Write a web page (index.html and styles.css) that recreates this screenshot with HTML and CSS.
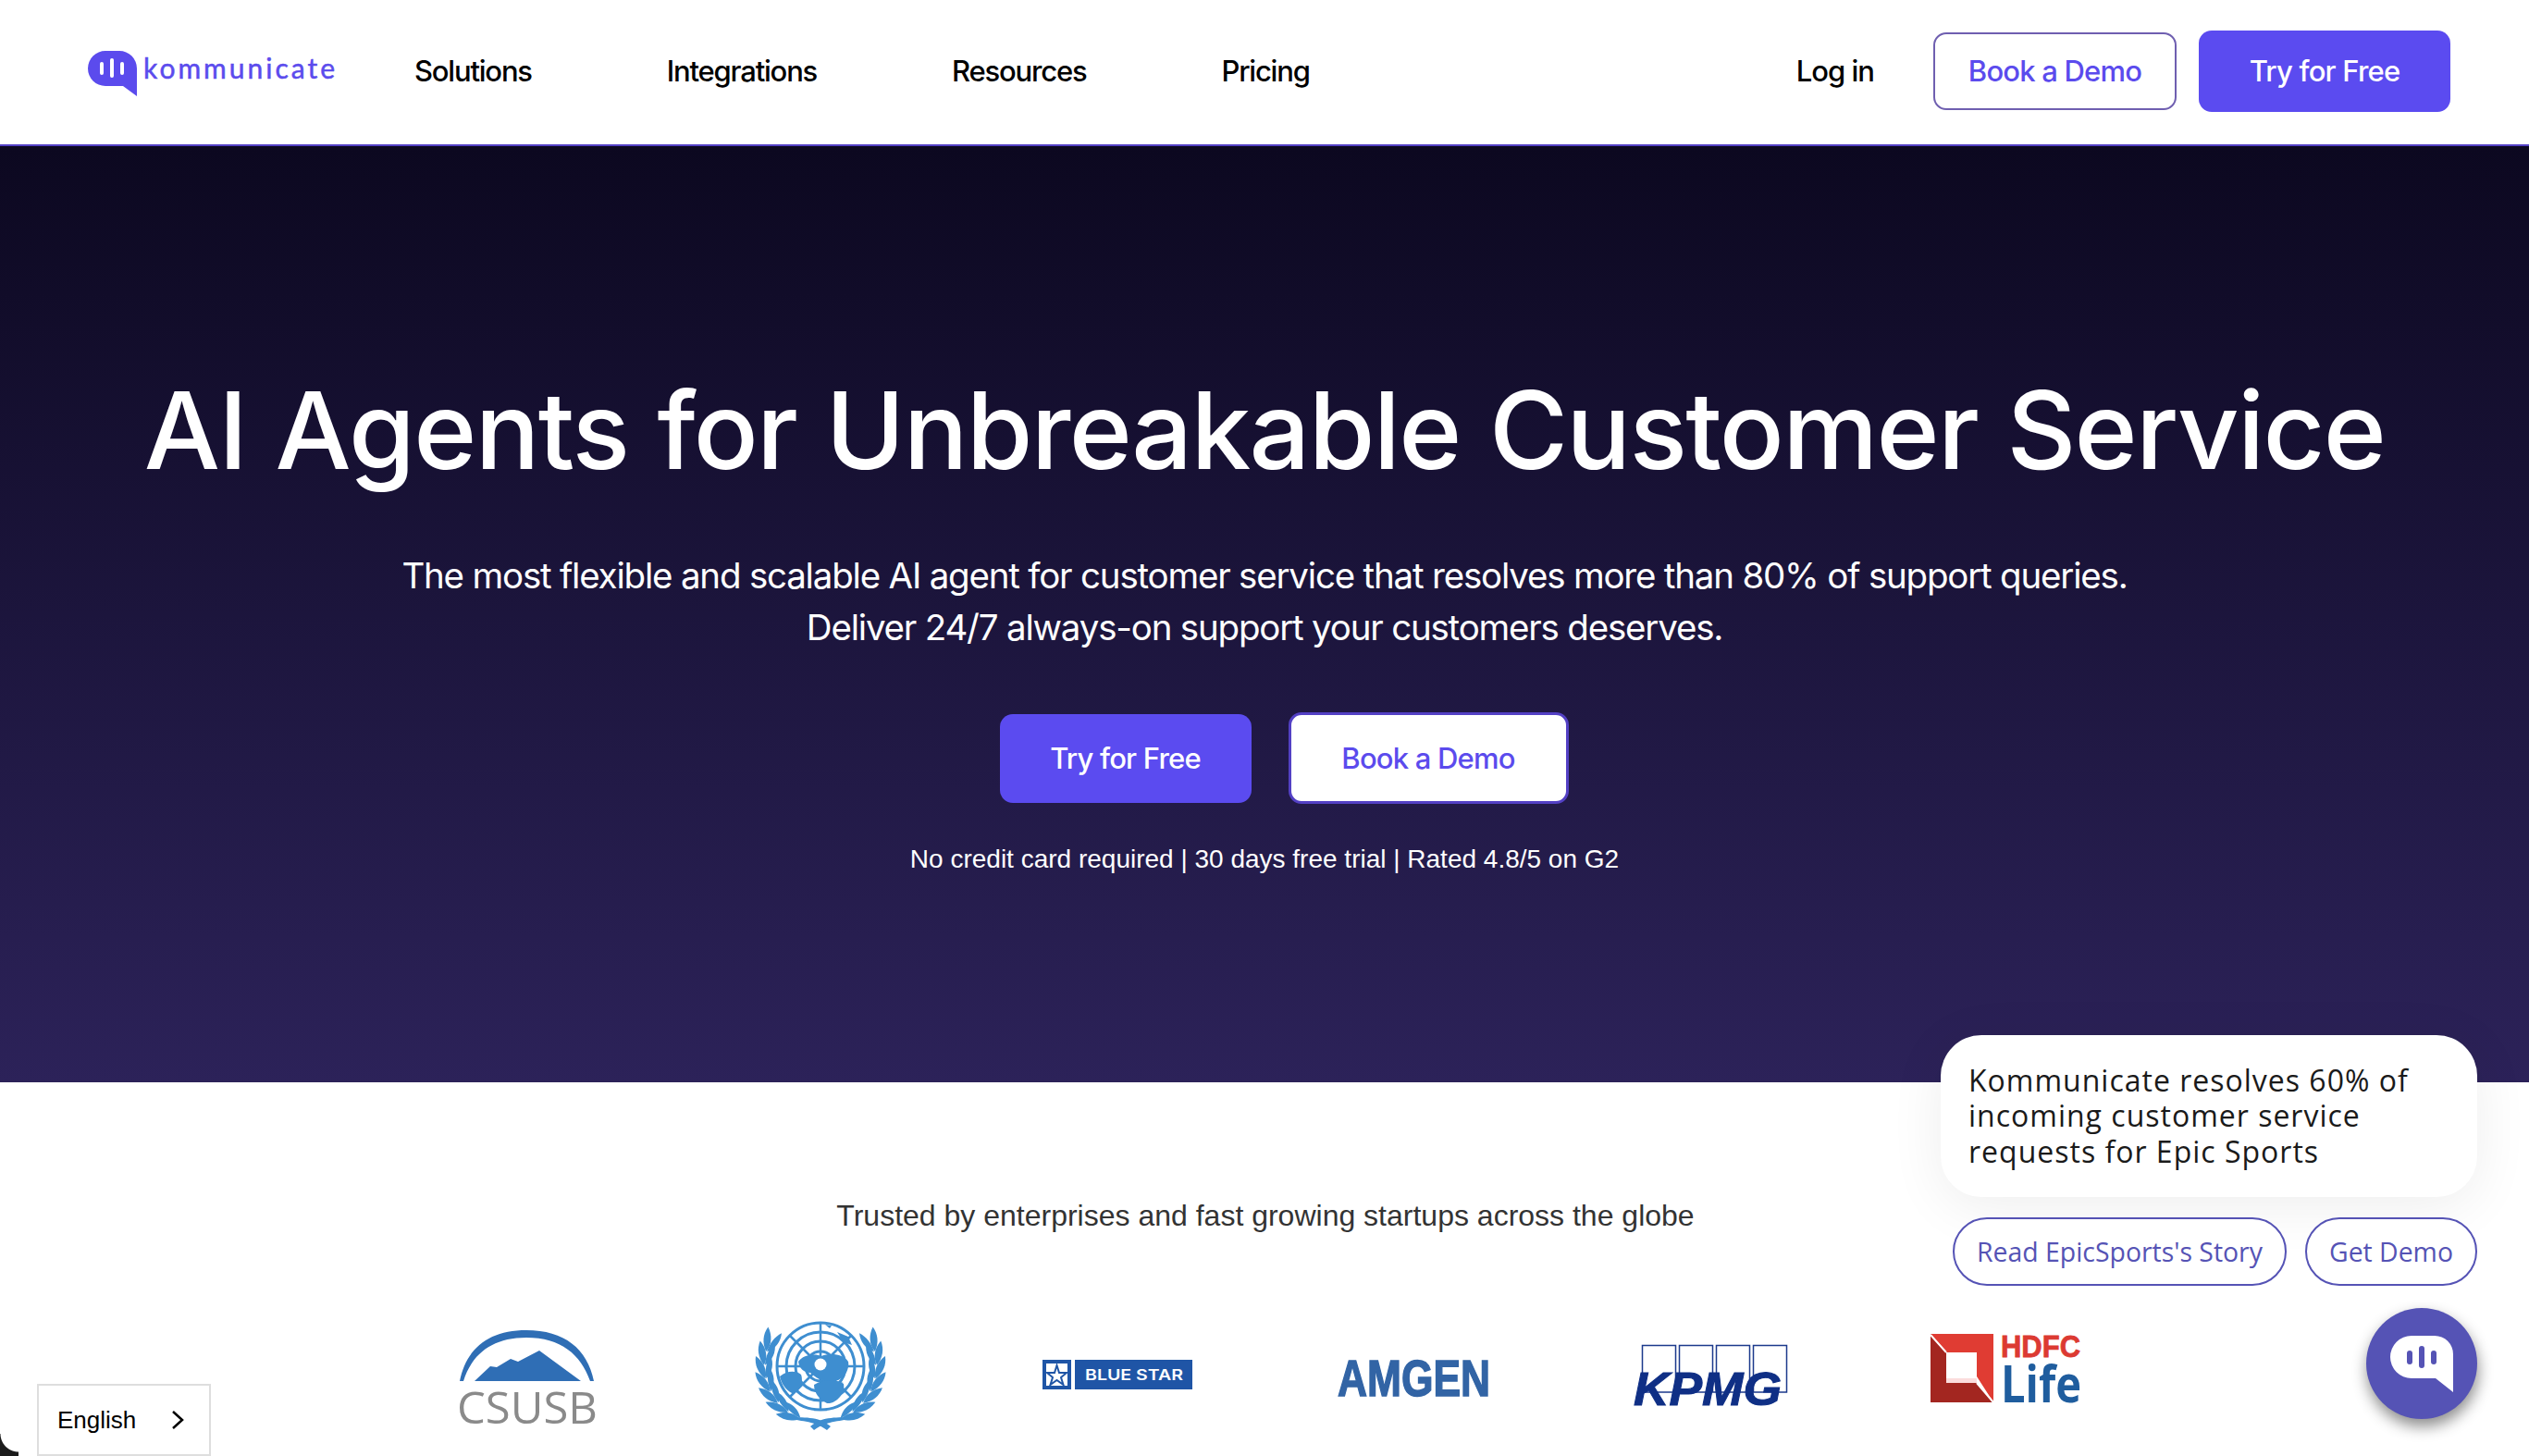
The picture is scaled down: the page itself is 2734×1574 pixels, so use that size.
FILE: index.html
```html
<!DOCTYPE html>
<html lang="en">
<head>
<meta charset="utf-8">
<title>Kommunicate</title>
<link rel="stylesheet" href="styles.css">
</head>
<body>
<header class="nav">
  <a class="logo">
    <svg class="logo-mark" viewBox="0 0 54 49"><path fill="#5b4bed" d="M20 0H35a19 19 0 0 1 19 19V49L39 38H20A19 19 0 0 1 1 19 19 19 0 0 1 20 0z"/><g fill="#fff"><rect x="14" y="12" width="4" height="14" rx="2"/><rect x="25" y="8" width="4" height="21" rx="2"/><rect x="36" y="12" width="4" height="14" rx="2"/></g></svg>
    <span class="logo-text">kommunicate</span>
  </a>
  <nav class="menu">
    <a>Solutions</a><a>Integrations</a><a>Resources</a><a>Pricing</a>
  </nav>
  <div class="actions">
    <a class="login">Log in</a>
    <a class="btn btn-outline btn-nav-outline">Book a Demo</a>
    <a class="btn btn-solid btn-nav-solid">Try for Free</a>
  </div>
</header>

<section class="hero">
  <h1>AI Agents for Unbreakable Customer Service</h1>
  <p class="lead">The most flexible and scalable AI agent for customer service that resolves more than 80% of support queries.<br>Deliver 24/7 always-on support your customers deserves.</p>
  <div class="cta">
    <a class="btn btn-solid btn-hero">Try for Free</a>
    <a class="btn btn-outline btn-hero btn-hero-outline">Book a Demo</a>
  </div>
  <p class="note">No credit card required | 30 days free trial | Rated 4.8/5 on G2</p>
</section>

<section class="trusted">
  <p class="trusted-title">Trusted by enterprises and fast growing startups across the globe</p>
  <div class="logos">
    <svg class="brand" viewBox="409 1427 320 120">
      <path fill="#2f6eb5" d="M495 1493C502 1458 526 1438 567 1438S633 1458 640 1493H636C626 1464 604 1446 567 1446S508 1464 499 1493z"/>
      <path fill="#2f6eb5" d="M511 1493L528 1477 535 1478 550 1469 558 1472 581 1460 626 1493z"/>
      <text x="492" y="1539" class="t-csusb" textLength="152" lengthAdjust="spacingAndGlyphs">CSUSB</text>
    </svg>

    <svg class="brand" viewBox="729 1427 320 120">
      <g fill="none" stroke="#3e8ed0">
        <circle cx="885" cy="1477" r="47" stroke-width="3"/>
        <circle cx="885" cy="1477" r="37" stroke-width="3"/>
        <circle cx="885" cy="1477" r="27" stroke-width="3"/>
        <circle cx="885" cy="1477" r="16" stroke-width="3"/>
        <path stroke-width="2.500" d="M885 1430V1524M838 1477H932M852 1444L918 1510M918 1444L852 1510"/>
      </g>
      <g fill="#3e8ed0">
        <path d="M861 1472C866 1464 880 1463 886 1466 896 1462 910 1464 915 1472 917 1482 908 1494 898 1493 890 1495 880 1490 874 1484 868 1484 862 1480 861 1472z"/>
        <path d="M841 1488C848 1482 858 1481 864 1486 867 1494 862 1507 854 1506 847 1502 843 1496 841 1488z"/>
        <path d="M878 1497C888 1491 904 1491 910 1496 912 1506 902 1518 892 1517 884 1513 878 1506 878 1497z"/>
        <path d="M903 1440L915 1445 919 1454 910 1451z"/>
        <path d="M890 1432L897 1433 895 1436z"/>
      </g>
      <circle cx="885" cy="1475" r="6.500" fill="#fff"/>
      <defs>
        <g id="blade">
          <path d="M824 1480C817 1472 815 1463 818 1454 825 1461 828 1471 824 1480z"/>
          <path d="M825 1480C825 1470 828 1462 834 1456 836 1465 833 1474 825 1480z"/>
        </g>
      </defs>
      <g fill="#3e8ed0">
        <g id="wreath">
          <use href="#blade" transform="rotate(18 885 1477)"/>
          <use href="#blade" transform="rotate(4 885 1477)"/>
          <use href="#blade" transform="rotate(-10 885 1477)"/>
          <use href="#blade" transform="rotate(-24 885 1477)"/>
          <use href="#blade" transform="rotate(-38 885 1477)"/>
          <use href="#blade" transform="rotate(-52 885 1477)"/>
          <use href="#blade" transform="rotate(-66 885 1477)"/>
          <path d="M850 1532C862 1538 876 1534 892 1546L896 1542C882 1530 866 1533 850 1532z"/>
        </g>
        <use href="#wreath" transform="translate(1770 0) scale(-1 1)"/>
      </g>
    </svg>

    <svg class="brand" viewBox="1049 1427 320 120">
      <rect x="1125" y="1470" width="31" height="32" fill="#1f55a6"/>
      <rect x="1129" y="1474" width="23" height="24" fill="#fff"/>
      <path fill="none" stroke="#1f55a6" stroke-width="2" d="M1140.500 1476L1143 1484 1151 1484 1145 1489 1147.500 1497 1140.500 1492 1133.500 1497 1136 1489 1130 1484 1138 1484z"/>
      <rect x="1160" y="1470" width="127" height="32" fill="#1f55a6"/>
      <text x="1171" y="1492" class="t-bluestar" textLength="106" lengthAdjust="spacingAndGlyphs">BLUE STAR</text>
    </svg>

    <svg class="brand" viewBox="1369 1427 320 120">
      <text x="1444" y="1509" class="t-amgen" textLength="165" lengthAdjust="spacingAndGlyphs">AMGEN</text>
    </svg>

    <svg class="brand" viewBox="1689 1427 320 120">
      <g fill="none" stroke="#1c3a8c" stroke-width="1.500">
        <path d="M1773.500 1505V1454.500H1809.500V1505M1813.500 1505V1454.500H1849.500V1505M1853.500 1505V1454.500H1889.500V1505M1893.500 1505V1454.500H1929.500V1505H1773.500"/>
      </g>
      <text x="1764" y="1519" class="t-kpmg" textLength="160" lengthAdjust="spacingAndGlyphs">KPMG</text>
    </svg>

    <svg class="brand" viewBox="2009 1427 320 120">
      <path fill="#e03c33" d="M2085 1442H2153V1516L2135 1488V1462H2102z"/>
      <path fill="#a32620" d="M2085 1442L2102 1462V1495H2135L2153 1516H2085z"/>
      <rect x="2102" y="1462" width="33" height="28" fill="#fff"/>
      <rect x="2102" y="1490" width="33" height="5" fill="#fbdcdc"/>
      <path fill="none" stroke="#fff" stroke-width="2" d="M2085 1443L2102 1462M2135 1495L2153 1516"/>
      <text x="2161" y="1467" class="t-hdfc" textLength="86" lengthAdjust="spacingAndGlyphs">HDFC</text>
      <text x="2161" y="1516" class="t-life" textLength="87" lengthAdjust="spacingAndGlyphs">Life</text>
    </svg>
  </div>
</section>

<div class="chat-widget">
  <div class="chat-bubble">Kommunicate resolves 60% of incoming customer service requests for Epic Sports</div>
  <div class="chat-links">
    <a class="chat-link chat-link-story">Read EpicSports's Story</a>
    <a class="chat-link chat-link-demo">Get Demo</a>
  </div>
  <button class="chat-fab" aria-label="Open chat">
    <svg class="chat-icon" viewBox="0 0 68 61"><path fill="#fff" d="M23 0H48a20 20 0 0 1 20 20V61L49 46H23A23 23 0 0 1 0 23 23 23 0 0 1 23 0z"/><g fill="#5553b5"><rect x="18" y="16" width="6" height="15" rx="3"/><rect x="31" y="11" width="6" height="24" rx="3"/><rect x="44" y="16" width="6" height="15" rx="3"/></g></svg>
  </button>
</div>

<div class="lang">
  <span>English</span>
  <svg class="lang-chev" viewBox="0 0 14 22"><path d="M2 2L12 11 2 20" fill="none" stroke="#000" stroke-width="2.500"/></svg>
</div>
<div class="corner"></div>
</body>
</html>
```
FILE: styles.css
```css
* { box-sizing: border-box; }
html, body { margin: 0; height: 1574px; overflow: hidden; background: #fff; }
body { font-family: "Inter", "Liberation Sans", sans-serif; color: #000; position: relative; }
a { text-decoration: none; color: inherit; }

.nav {
  height: 158px;
  border-bottom: 2px solid #5340c4;
  display: flex;
  align-items: center;
  padding: 0 85px 3px 94px;
}
.logo { display: flex; align-items: flex-start; width: 354px; flex: none; }
.logo-mark { width: 54px; height: 49px; display: block; margin-top: 6px; }
.logo-text {
  font-family: "Lato", sans-serif;
  font-size: 30px;
  letter-spacing: 3px;
  color: #5b4bed;
  -webkit-text-stroke: 0.5px #5b4bed;
  margin: 6px 0 0 7px;
  line-height: 36px;
}
.menu { display: flex; gap: 146px; font-size: 31px; letter-spacing: -1.2px; font-weight: 500; }
.actions { margin-left: auto; display: flex; align-items: center; }
.login { font-size: 31px; letter-spacing: -1px; font-weight: 500; margin-right: 64px; }

.btn {
  display: flex;
  align-items: center;
  justify-content: center;
  font-size: 31px;
  font-weight: 500;
  letter-spacing: -0.8px;
  border-radius: 14px;
}
.btn-solid { background: #5b4bf0; color: #fff; }
.btn-outline { background: #fff; color: #5b4bed; border: 2px solid #6f5fb0; }
.btn-nav-outline { width: 263px; height: 84px; margin-right: 24px; }
.btn-nav-solid { width: 272px; height: 88px; }

.hero {
  height: 1012px;
  background: linear-gradient(180deg, #0c0820 0%, #2c2259 100%);
  color: #fff;
  display: flex;
  flex-direction: column;
  align-items: center;
  padding-top: 232px;
}
.hero h1 {
  margin: 0;
  font-size: 116px;
  line-height: 150px;
  font-weight: 500;
  letter-spacing: -1.7px;
  word-spacing: 2px;
  white-space: nowrap;
}
.lead {
  margin: 54px 0 0;
  font-size: 38.500px;
  line-height: 56px;
  letter-spacing: -1.2px;
  text-align: center;
}
.cta { display: flex; gap: 40px; margin: 64px 0 0 42px; align-items: center; }
.btn-hero { width: 272px; height: 96px; }
.btn-hero-outline { width: 303px; height: 99px; border-color: #5340c4; border-width: 3px; }
.note { margin: 40px 0 0; font-family: "Liberation Sans", sans-serif; font-size: 28px; line-height: 40px; }

.trusted { display: flex; flex-direction: column; align-items: center; }
.trusted-title { margin: 124px 0 0 2px; font-family: "Liberation Sans", sans-serif; font-size: 32px; line-height: 40px; color: #333; }
.logos { display: grid; grid-template-columns: repeat(6, 320px); margin: 93px 0 0 8px; height: 120px; }
.brand { width: 320px; height: 120px; display: block; overflow: visible; }
.t-csusb { font-family: "Open Sans", sans-serif; font-size: 48px; fill: #8a8a8a; }
.t-bluestar { font-family: "Inter", sans-serif; font-size: 16px; font-weight: 600; fill: #fff; }
.t-amgen { font-family: "Liberation Sans", sans-serif; font-size: 56px; font-weight: 700; fill: #3264a5; stroke: #3264a5; stroke-width: 1.500px; }
.t-kpmg { font-family: "Liberation Sans", sans-serif; font-size: 50px; font-weight: 700; font-style: italic; fill: #0f2f85; stroke: #0f2f85; stroke-width: 1px; }
.t-hdfc { font-family: "Liberation Sans", sans-serif; font-size: 34px; font-weight: 700; fill: #dc3a32; stroke: #dc3a32; stroke-width: 0.8px; }
.t-life { font-family: "Open Sans", sans-serif; font-size: 56px; font-weight: 700; fill: #1f5d9e; }

.chat-widget {
  position: absolute;
  left: 2098px;
  top: 1119px;
  width: 580px;
  font-family: "Open Sans", sans-serif;
}
.chat-bubble {
  height: 175px;
  background: #fff;
  border-radius: 44px;
  padding: 30px 30px;
  font-size: 32px;
  line-height: 38.250px;
  letter-spacing: 1px;
  color: #1a1a1a;
  box-shadow: 0 10px 60px rgba(0, 0, 0, 0.07);
}
.chat-links { display: flex; justify-content: flex-end; gap: 20px; margin-top: 22px; }
.chat-link {
  height: 74px;
  border: 2px solid #5553b5;
  border-radius: 37px;
  display: flex;
  align-items: center;
  justify-content: center;
  color: #5553b5;
  background: #fff;
  font-size: 28.400px;
  font-weight: 500;
}
.chat-link-story { width: 361px; }
.chat-link-demo { width: 186px; }
.chat-fab {
  display: flex;
  align-items: center;
  justify-content: center;
  width: 120px;
  height: 120px;
  margin: 24px 0 0 auto;
  border: 0;
  padding: 0;
  border-radius: 50%;
  background: #5553b5;
  box-shadow: 1px 8px 16px rgba(0, 0, 0, 0.45);
}
.chat-icon { width: 68px; height: 61px; display: block; }

.lang {
  position: absolute;
  left: 40px;
  top: 1496px;
  width: 188px;
  height: 78px;
  border: 2px solid #dedede;
  background: #fff;
  display: flex;
  align-items: center;
  padding: 0 27px 0 20px;
  justify-content: space-between;
  font-family: "Liberation Sans", sans-serif;
  font-size: 26px;
}
.lang-chev { width: 14px; height: 22px; display: block; }
.corner {
  position: absolute;
  left: 0;
  bottom: 0;
  width: 20px;
  height: 24px;
  background: radial-gradient(circle at 100% 0, transparent 19px, #1c1c1c 20px);
}
```
